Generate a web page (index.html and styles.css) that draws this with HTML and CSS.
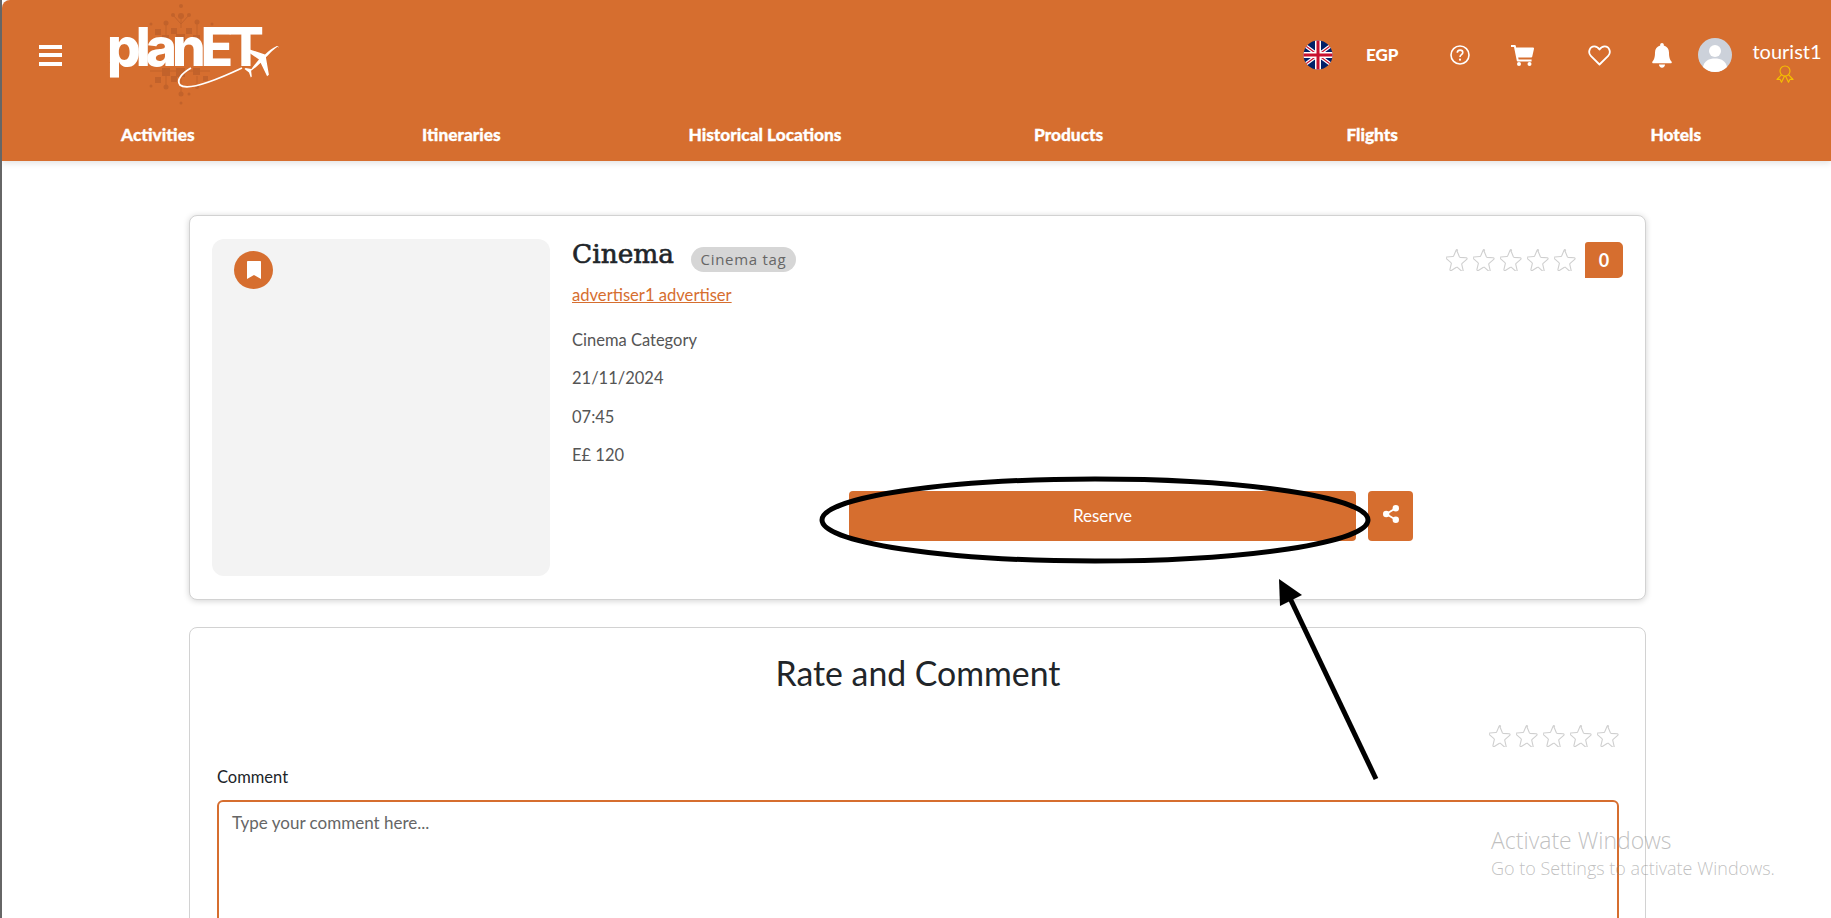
FILE: index.html
```html
<!DOCTYPE html>
<html lang="en">
<head>
  <meta charset="UTF-8" />
  <meta name="viewport" content="width=device-width, initial-scale=1.0"/>
  <title>planET</title>
  <link rel="stylesheet" href="styles.css">
</head>
<body>
  <svg width="0" height="0" class="defs">
    <symbol id="star" viewBox="0 0 24 24">
      <path d="M12 2.2l2.6 6.2c.2.4.5.6.9.7l6.6.5c.9.1 1.200 1.200.5 1.800l-5 4.300c-.3.300-.5.700-.4 1.100l1.500 6.400c.2.900-.7 1.500-1.500 1.100L12.500 20c-.4-.2-.8-.2-1.100 0l-5.600 3.400c-.8.500-1.700-.2-1.500-1.100l1.500-6.400c.1-.4 0-.8-.4-1.100l-5-4.300c-.7-.6-.3-1.700.5-1.800l6.600-.5c.4 0 .8-.3.900-.7l2.600-6.200c.4-.8 1.300-.8 1.600 0z" fill="#fff" stroke="#cfcfcf" stroke-width="1.200"/>
    </symbol>
  </svg>

  <header class="topbar">
    <div class="topbar-main">
      <button class="burger"><span></span><span></span><span></span></button>

      <div class="logo">
        <svg class="logo-art" viewBox="0 0 190 110" width="190" height="110">
          <g fill="#c2622b">
            <circle cx="81" cy="6" r="2"/><circle cx="81" cy="16" r="3"/><circle cx="73" cy="15" r="2"/><circle cx="89" cy="15" r="2"/>
            <circle cx="66" cy="23" r="2.500"/><circle cx="97" cy="22" r="2.500"/><circle cx="51" cy="24" r="1.500"/><circle cx="112" cy="24" r="1.500"/>
            <rect x="55" y="29" width="6" height="6"/><rect x="71" y="28" width="6" height="6"/><rect x="86" y="28" width="6" height="6"/>
            <rect x="62" y="35" width="7" height="7"/><rect x="76" y="34" width="9" height="9"/><rect x="93" y="35" width="7" height="7"/>
            <rect x="62" y="68" width="8" height="8"/><rect x="76" y="68" width="9" height="9"/><rect x="93" y="68" width="7" height="7"/>
            <rect x="55" y="77" width="6" height="6"/><rect x="71" y="76" width="6" height="6"/><rect x="103" y="76" width="5" height="5"/>
            <circle cx="66" cy="87" r="2.500"/><circle cx="97" cy="87" r="2"/>
            <circle cx="51" cy="86" r="1.500"/><circle cx="81" cy="94" r="2.500"/><circle cx="81" cy="103" r="1.500"/><circle cx="89" cy="94" r="1.500"/>
          </g>
          <g stroke="#c2622b" stroke-width="1" fill="none">
            <path d="M73 15l8 9 8-9M81 16v12M66 23v14M97 22v14M50 71h60M66 76v11M97 76v8M81 78v17"/>
          </g>
          <path d="M91 68c-9 5-15 12-11 17 6 5 28-1 62-17" fill="none" stroke="#fff" stroke-width="1.800"/>
          <path d="M178 48c1-1.500 0-2.500-2-1.600-3 1.300-7 4.200-11 8l-17-5.500-2 1.600 13 9c-3.500 4-6 7-7.500 9.500l-6-1-1 1 4.500 3.500 1.800 5 1-1-.7-5.700c2.500-1.700 6-4.500 9.500-8l6.500 13.500 1.800-1.500-3-17.500c4.500-4.500 9-9.500 12.100-10.900z" fill="#fff"/>
        </svg>
        <span class="logo-text">planET</span>
      </div>

      <div class="topbar-right">
        <svg class="flag" viewBox="0 0 30 30" width="30" height="30">
          <defs><clipPath id="flag-clip"><circle cx="15" cy="15" r="14.500"/></clipPath></defs>
          <g clip-path="url(#flag-clip)">
            <rect width="30" height="30" fill="#012169"/>
            <path d="M0 4L30 26M30 4L0 26" stroke="#fff" stroke-width="3.500"/>
            <path d="M0 4L30 26M30 4L0 26" stroke="#c8102e" stroke-width="1.200"/>
            <path d="M15 0v30M0 15h30" stroke="#fff" stroke-width="6"/>
            <path d="M15 0v30M0 15h30" stroke="#c8102e" stroke-width="3"/>
          </g>
        </svg>
        <span class="currency">EGP</span>

        <svg class="icon icon-help" viewBox="0 0 20 20" width="20" height="20">
          <circle cx="10" cy="10" r="9" fill="none" stroke="#fff" stroke-width="1.600"/>
          <path d="M7.300 7.800c0-1.600 1.200-2.700 2.800-2.700s2.700 1 2.700 2.400c0 2.200-2.800 2.200-2.800 4.500" fill="none" stroke="#fff" stroke-width="1.600"/>
          <circle cx="10" cy="14.700" r="1.100" fill="#fff"/>
        </svg>

        <svg class="icon icon-cart" viewBox="0 0 23 21" width="23" height="21">
          <path d="M0 0h3.800c.5 0 .9.300 1 .8l.3 1.700h17c.6 0 1 .6.900 1.200l-1.800 8c-.1.500-.5.800-1 .8H7.200l.4 2h13v2H6.800c-.5 0-.9-.3-1-.8L3 2H0z" fill="#fff"/>
          <circle cx="8" cy="19" r="2" fill="#fff"/><circle cx="18.500" cy="19" r="2" fill="#fff"/>
        </svg>

        <svg class="icon icon-heart" viewBox="0 0 23 21" width="23" height="21">
          <path d="M11.500 19.500L2.800 10.800C-.5 7.500 1.700 1.400 6.300 1.400c2.300 0 4 1.200 5.200 3.100 1.200-1.900 2.900-3.100 5.200-3.100 4.600 0 6.800 6.100 3.500 9.400z" fill="none" stroke="#fff" stroke-width="1.800" stroke-linejoin="round"/>
        </svg>

        <svg class="icon icon-bell" viewBox="0 0 20 25" width="20" height="25">
          <path d="M10 0c-1 0-1.800.8-1.800 1.800v.8C5 3.400 3 6 3 9.500c0 5.500-1.200 7.500-2.500 9-.6.700-.2 1.800.8 1.800h17.400c1 0 1.400-1.100.8-1.800-1.300-1.500-2.500-3.500-2.500-9 0-3.500-2-6.100-5.200-6.900v-.8C11.800.8 11 0 10 0z" fill="#fff"/>
          <path d="M7 21.500h6c0 1.900-1.300 3.200-3 3.200s-3-1.300-3-3.200z" fill="#fff"/>
        </svg>

        <svg class="avatar" viewBox="0 0 34 34" width="34" height="34">
          <circle cx="17" cy="17" r="17" fill="#ccd1da"/>
          <circle cx="17" cy="13" r="6" fill="#fff"/>
          <path d="M5 29c1-6 6-8.500 12-8.500S28 23 29 29c-3 3-7.500 5-12 5s-9-2-12-5z" fill="#fff"/>
        </svg>

        <div class="user">
          <span class="user-name">tourist1</span>
          <svg class="medal" viewBox="0 0 18 18" width="18" height="18">
            <g fill="none" stroke="#f5c000" stroke-width="1.100" stroke-linejoin="round">
              <circle cx="9" cy="6" r="5"/>
              <path d="M5.500 9.700L1 14.500l3-.3 1.500 3 3-6.200M12.500 9.700l4.500 4.800-3-.3-1.500 3-3-6.200"/>
            </g>
          </svg>
        </div>
      </div>
    </div>

    <nav class="topbar-nav">
      <a>Activities</a>
      <a>Itineraries</a>
      <a>Historical Locations</a>
      <a>Products</a>
      <a>Flights</a>
      <a>Hotels</a>
    </nav>
  </header>

  <main class="content">
    <section class="card activity">
      <div class="photo">
        <span class="save">
          <svg viewBox="0 0 14 18" width="14" height="18"><path d="M1 0h12c.6 0 1 .4 1 1v17l-7-4-7 4V1c0-.6.4-1 1-1z" fill="#fff"/></svg>
        </span>
      </div>

      <div class="details">
        <div class="title-row">
          <h2>Cinema</h2>
          <span class="tag">Cinema tag</span>
        </div>
        <a class="advertiser">advertiser1 advertiser</a>
        <p>Cinema Category</p>
        <p>21/11/2024</p>
        <p>07:45</p>
        <p>E£ 120</p>
        <div class="actions">
          <button class="reserve">Reserve</button>
          <button class="share">
            <svg viewBox="0 0 16 18" width="16" height="18">
              <circle cx="12.800" cy="3.200" r="3.200" fill="#fff"/><circle cx="3.200" cy="9" r="3.200" fill="#fff"/><circle cx="12.800" cy="14.800" r="3.200" fill="#fff"/>
              <path d="M12.800 3.200L3.200 9l9.600 5.800" fill="none" stroke="#fff" stroke-width="1.800"/>
            </svg>
          </button>
        </div>
      </div>

      <div class="rating">
        <div class="stars">
          <svg><use href="#star"/></svg><svg><use href="#star"/></svg><svg><use href="#star"/></svg><svg><use href="#star"/></svg><svg><use href="#star"/></svg>
        </div>
        <span class="score">0</span>
      </div>
    </section>

    <section class="card review">
      <h1>Rate and Comment</h1>
      <div class="stars stars-input">
        <svg><use href="#star"/></svg><svg><use href="#star"/></svg><svg><use href="#star"/></svg><svg><use href="#star"/></svg><svg><use href="#star"/></svg>
      </div>
      <label for="comment">Comment</label>
      <textarea id="comment" placeholder="Type your comment here..."></textarea>
    </section>
  </main>

  <!-- marker drawn over the page -->
  <svg class="annotation" viewBox="0 0 1831 918" width="1831" height="918">
    <ellipse cx="1095" cy="520" rx="273" ry="41" fill="none" stroke="#000" stroke-width="5"/>
    <path d="M1376 779L1288 594" fill="none" stroke="#000" stroke-width="5"/>
    <path d="M1279 579l1 27 22-11z" fill="#000"/>
  </svg>

  <div class="activate">
    <span class="activate-title">Activate Windows</span>
    <span class="activate-sub">Go to Settings to activate Windows.</span>
  </div>
</body>
</html>
```

FILE: styles.css
```css
html {
  background: #666;
}

body {
  margin: 0;
  height: 918px;
  overflow: hidden;
  background: #fff;
  font-family: "Lato", sans-serif;
  color: #212529;
  border-left: 2px solid #666;
  box-sizing: border-box;
}

.defs {
  position: absolute;
}

.topbar {
  background-color: #d66e2f;
  height: 161px;
  border-top-left-radius: 8px;
  box-shadow: 0 2px 6px rgba(0, 0, 0, 0.12);
  color: white;
  display: flex;
  flex-direction: column;
}

.topbar-main {
  height: 110px;
  display: flex;
  align-items: center;
  padding-left: 37px;
}

.burger {
  width: 23px;
  height: 21px;
  padding: 0;
  border: none;
  background: none;
  display: flex;
  flex-direction: column;
  justify-content: space-between;
}

.burger span {
  display: block;
  height: 4px;
  background-color: white;
}

.logo {
  position: relative;
  width: 190px;
  height: 110px;
  margin-left: 38px;
}

.logo-art {
  display: block;
}

.logo-text {
  position: absolute;
  left: 7px;
  top: 17px;
  font-family: "Inter", sans-serif;
  font-size: 53px;
  font-weight: 800;
  letter-spacing: -5px;
  line-height: 60px;
  color: white;
}

.topbar-right {
  margin-left: auto;
  display: flex;
  align-items: center;
  padding-right: 11px;
  height: 90px;
}

.flag {
  margin-right: 33px;
}

.currency {
  font-weight: 900;
  font-size: 17px;
  width: 33px;
  margin: -2px 51px 0 0;
}

.icon-help {
  margin-right: 41px;
}

.icon-cart {
  margin-right: 54px;
}

.icon-heart {
  margin-right: 41px;
}

.icon-bell {
  margin-right: 26px;
}

.avatar {
  margin-right: 22px;
}

.user {
  width: 66px;
  margin-top: 12px;
  display: flex;
  flex-direction: column;
  align-items: center;
}

.user-name {
  font-size: 20px;
  line-height: 24px;
  margin-bottom: 2px;
}

.medal {
  margin-right: 4px;
}

.topbar-nav {
  display: grid;
  grid-template-columns: repeat(6, 303.6px);
  padding: 10px 0 0 4px;
  height: 41px;
  align-items: start;
  text-align: center;
  font-weight: 900;
  font-size: 17.3px;
  line-height: 30px;
  -webkit-text-stroke: 0.3px white;
}

.content {
  width: 1457px;
  margin: 54px 0 0 187px;
}

.card {
  border: 1px solid #d2d2d2;
  border-radius: 8px;
  background: white;
  box-sizing: border-box;
}

.activity {
  height: 385px;
  padding: 23px 20px 20px 22px;
  display: flex;
  position: relative;
  box-shadow: 0 1px 6px rgba(0, 0, 0, 0.18);
}

.photo {
  width: 338px;
  height: 337px;
  flex: none;
  background-color: #f3f3f3;
  border-radius: 12px;
  padding: 12px 0 0 22px;
  box-sizing: border-box;
}

.save {
  width: 39px;
  height: 38px;
  border-radius: 50%;
  background-color: #d66e2f;
  display: flex;
  align-items: center;
  justify-content: center;
}

.details {
  flex: 1;
  padding-left: 22px;
  color: #555;
  font-size: 16.5px;
}

.title-row {
  display: flex;
  align-items: center;
  height: 28px;
  gap: 17px;
  margin-bottom: 16px;
}

.title-row h2 {
  margin: 0;
  font-family: "DejaVu Serif", serif;
  font-size: 26.4px;
  font-weight: 400;
  -webkit-text-stroke: 0.6px #212529;
  letter-spacing: 0;
  color: #212529;
}

.tag {
  background-color: #d6d6d6;
  border-radius: 13px;
  padding: 0 9.5px;
  height: 25px;
  line-height: 25px;
  margin-top: 12px;
  font-family: "Open Sans", sans-serif;
  font-size: 15px;
  letter-spacing: 0.7px;
  color: #666;
}

.advertiser {
  display: block;
  color: #d66e2f;
  font-size: 16.6px;
  text-decoration: underline;
  line-height: 24px;
  margin-bottom: 21px;
}

.details p {
  margin: 0;
  height: 38.3px;
  line-height: 24px;
}

.actions {
  display: flex;
  gap: 12px;
  width: 564px;
  margin: 10px 0 0 277px;
}

.actions button {
  border: none;
  height: 50px;
  border-radius: 4px;
  background-color: #d66e2f;
  color: white;
  font-family: inherit;
  font-size: 17px;
  padding: 0;
}

.reserve {
  flex: 1;
  padding-bottom: 2px !important;
}

.share {
  width: 45px;
}

.rating {
  position: absolute;
  top: 26px;
  right: 22px;
  display: flex;
  align-items: center;
}

.stars {
  display: flex;
  gap: 5px;
}

.stars svg {
  width: 22px;
  height: 22px;
}

.score {
  width: 38px;
  height: 36px;
  margin-left: 9px;
  background-color: #d66e2f;
  color: white;
  border-radius: 3px 5px 5px 0;
  text-align: center;
  line-height: 36px;
  font-weight: 700;
  font-size: 18px;
}

.review {
  height: 400px;
  margin-top: 27px;
  padding: 22px 26px 0 27px;
}

.review h1 {
  margin: 0;
  text-align: center;
  font-size: 33.8px;
  font-weight: 400;
  line-height: 46px;
}

.stars-input {
  justify-content: flex-end;
  margin-top: 29px;
}

.review label {
  display: block;
  margin-top: 18px;
  font-size: 16.5px;
  line-height: 24px;
}

.review textarea {
  display: block;
  width: 100%;
  height: 200px;
  margin-top: 11px;
  box-sizing: border-box;
  border: 2px solid #d66e2f;
  border-radius: 6px;
  padding: 10px 13px;
  outline: none;
  resize: none;
  font-family: inherit;
  font-size: 17px;
}

.review textarea::placeholder {
  color: #666;
}

.annotation {
  position: absolute;
  left: 0;
  top: 0;
  pointer-events: none;
}

.activate {
  position: absolute;
  left: 1491px;
  top: 825px;
  display: flex;
  flex-direction: column;
  font-family: "Open Sans", sans-serif;
  font-weight: 300;
  color: rgba(130, 130, 130, 0.5);
  pointer-events: none;
}

.activate-title {
  font-size: 23px;
  line-height: 30px;
}

.activate-sub {
  font-size: 18px;
  line-height: 26px;
}
```
